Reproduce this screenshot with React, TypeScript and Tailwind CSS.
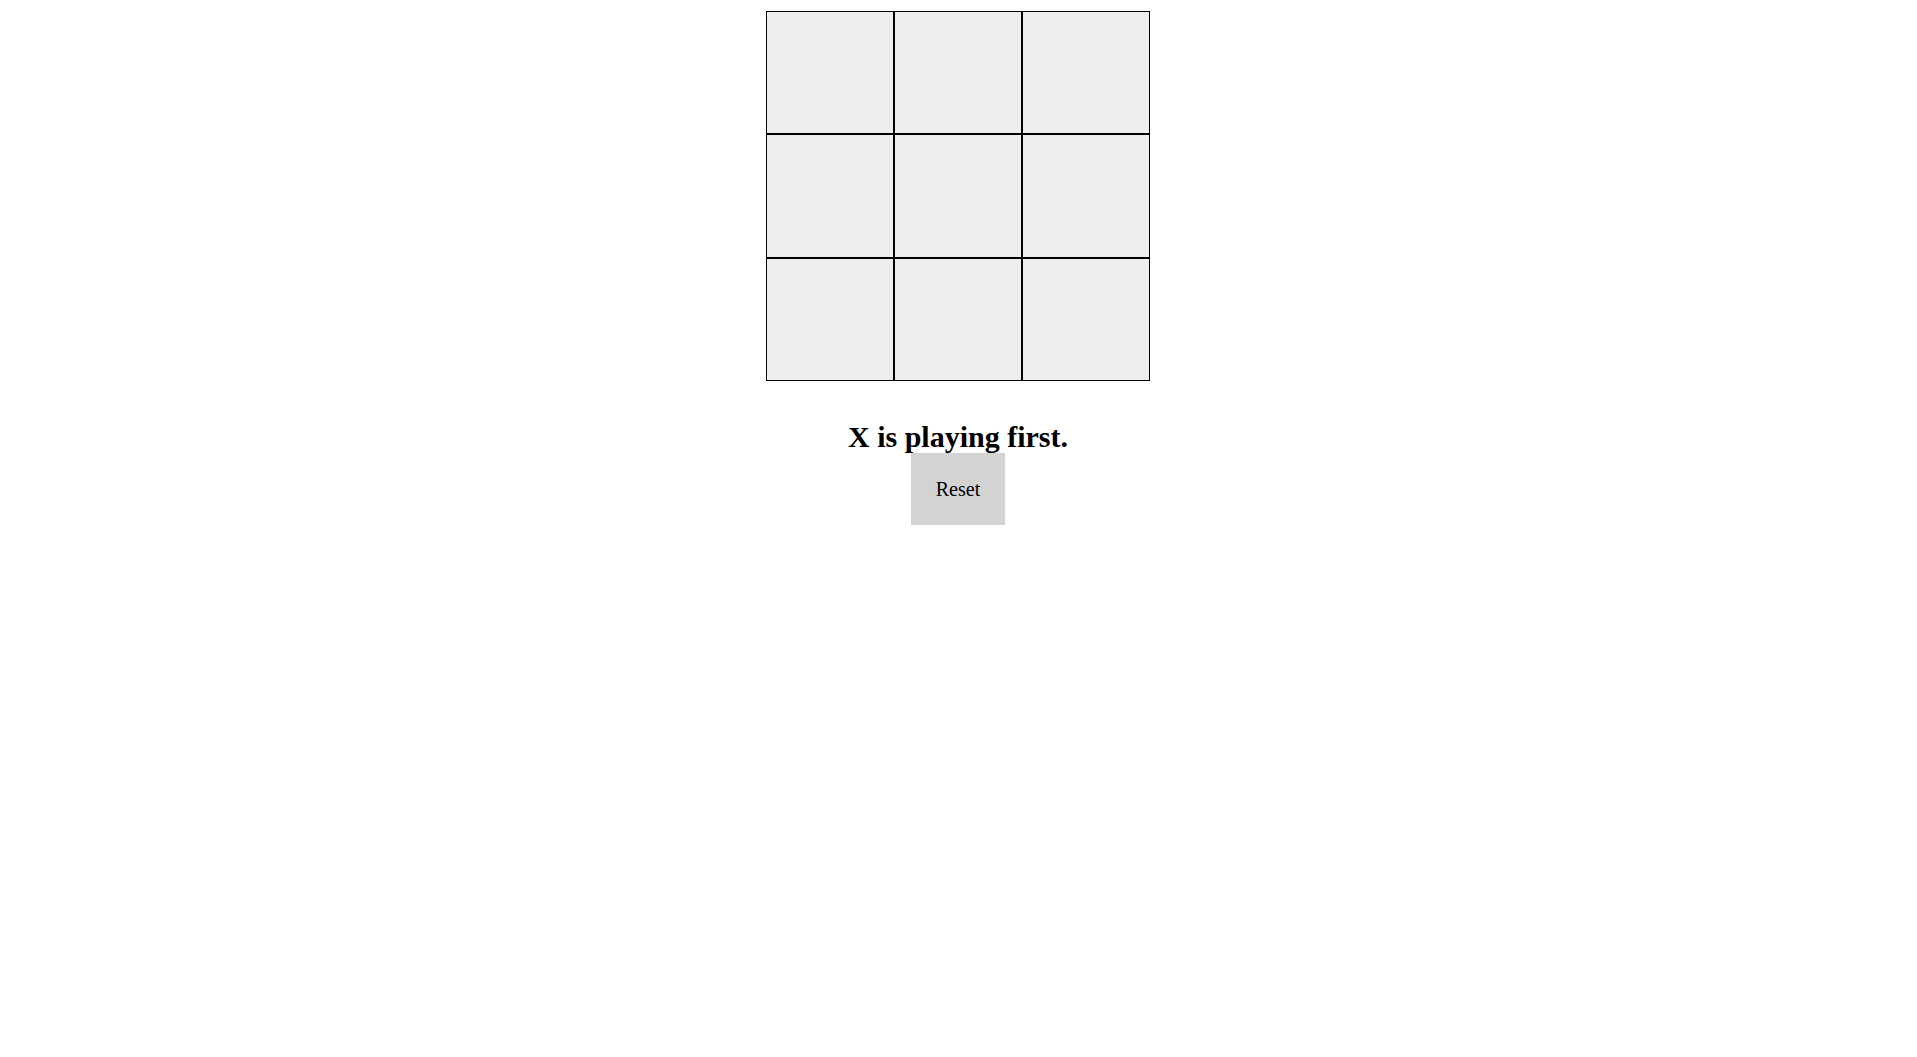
const cells = Array.from({ length: 9 }, (_, i) => i);

const App = () => {
  return (
    <div className="flex flex-col items-center pr-px bg-white min-h-screen font-['Liberation_Serif',serif] text-black">
      <div className="mt-[11px] grid grid-cols-3 grid-rows-3 w-[384px] h-[370px]">
        {cells.map((id) => (
          <button
            key={id}
            className="border border-black bg-[#eeeeee]"
          />
        ))}
      </div>
      <h2 className="mt-[39px] text-[30px] leading-[33px] font-bold">
        X is playing first.
      </h2>
      <button className="w-[94px] h-[72px] bg-[#d3d3d3] text-[20px]">
        Reset
      </button>
    </div>
  );
};

export default App;
